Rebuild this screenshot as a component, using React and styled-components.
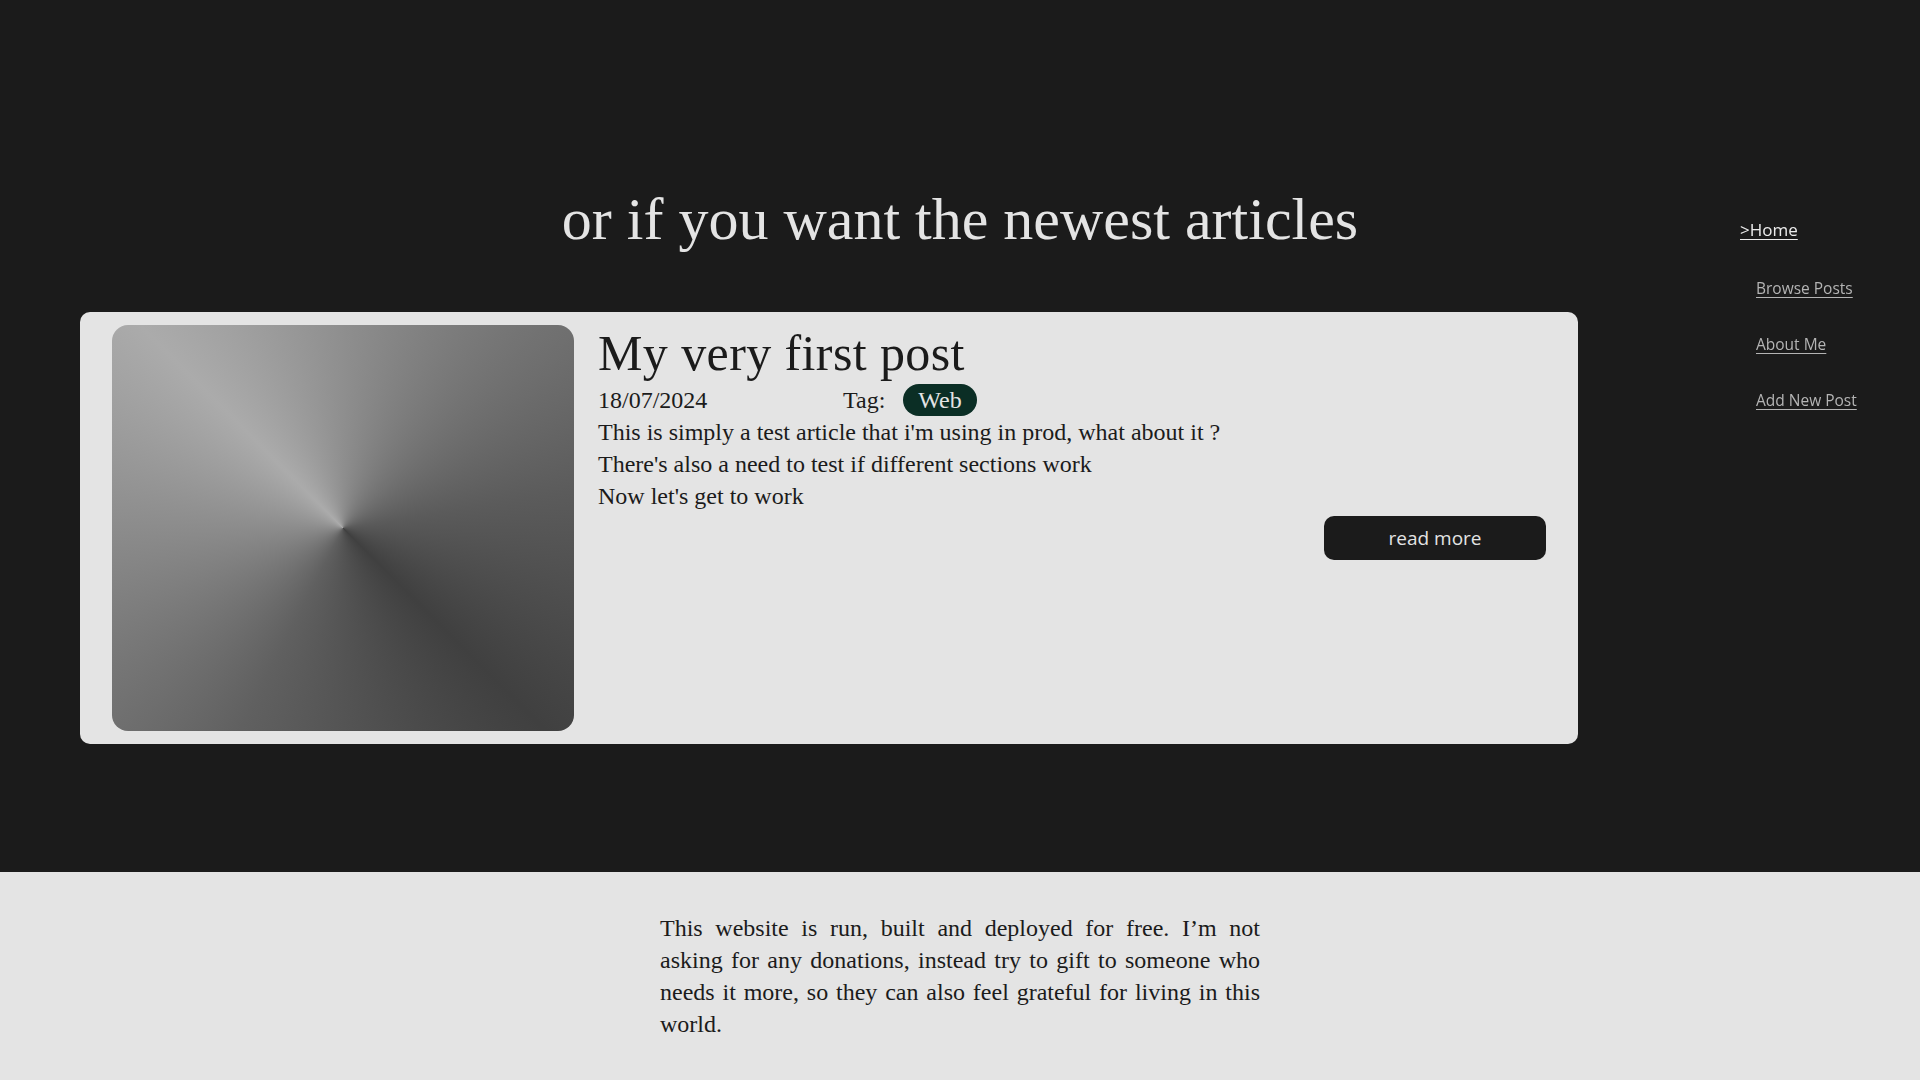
import React from 'react'
import styled, { createGlobalStyle } from 'styled-components'

const GlobalStyle = createGlobalStyle`
  html, body {
    margin: 0;
    padding: 0;
    background: #1b1b1b;
  }
  * {
    box-sizing: border-box;
  }
`;

const navLinks = [
  { label: '>Home', href: '#', active: true },
  { label: 'Browse Posts', href: '#' },
  { label: 'About Me', href: '#' },
  { label: 'Add New Post', href: '#' },
];

const post = {
  title: 'My very first post',
  date: '18/07/2024',
  tag: 'Web',
  lines: [
    "This is simply a test article that i'm using in prod, what about it ?",
    "There's also a need to test if different sections work",
    "Now let's get to work",
  ],
};

const App = () => {
  return (
    <>
      <GlobalStyle />
      <Nav>
        {navLinks.map((link) => (
          <NavLink key={link.label} href={link.href} $active={link.active}>
            {link.label}
          </NavLink>
        ))}
      </Nav>
      <Hero>
        <Heading>or if you want the newest articles</Heading>
        <PostCard>
          <Thumb />
          <PostBody>
            <PostTitle>{post.title}</PostTitle>
            <MetaRow>
              <PostDate>{post.date}</PostDate>
              <TagLabel>Tag:</TagLabel>
              <TagPill>{post.tag}</TagPill>
            </MetaRow>
            <Excerpt>
              {post.lines.map((line) => (
                <span key={line}>{line}</span>
              ))}
            </Excerpt>
            <ReadMore>read more</ReadMore>
          </PostBody>
        </PostCard>
      </Hero>
      <Footer>
        <FooterText>
          This website is run, built and deployed for free. I’m not asking for any donations,
          instead try to gift to someone who needs it more, so they can also feel grateful for
          living in this world.
        </FooterText>
      </Footer>
    </>
  )
}

const Nav = styled.nav`
  position: fixed;
  top: 218px;
  left: 1740px;
  display: flex;
  flex-direction: column;
  align-items: flex-start;
  gap: 34px;
  font-family: "Open Sans", "Noto Sans", sans-serif;
`;

const NavLink = styled.a`
  color: ${({ $active }) => ($active ? '#ececec' : '#b4b4b4')};
  font-size: ${({ $active }) => ($active ? '17px' : '15.5px')};
  line-height: ${({ $active }) => ($active ? '24px' : '22px')};
  margin-left: ${({ $active }) => ($active ? '0' : '16px')};
  margin-bottom: ${({ $active }) => ($active ? '1px' : '0')};
  text-decoration: underline;
  text-underline-offset: 3px;
`;

const Hero = styled.main`
  background: #1b1b1b;
  padding: 185px 0 128px;
`;

const Heading = styled.h1`
  margin: 0;
  text-align: center;
  color: #e4e4e4;
  font-family: "Liberation Serif", serif;
  font-weight: 400;
  font-size: 60px;
  line-height: 69px;
`;

const PostCard = styled.article`
  display: flex;
  gap: 24px;
  width: 1498px;
  height: 432px;
  margin: 58px 0 0 80px;
  padding: 13px 32px 13px 32px;
  background: #e4e4e4;
  border-radius: 10px;
`;

const Thumb = styled.div`
  flex: 0 0 462px;
  height: 406px;
  border-radius: 16px;
  background: conic-gradient(from 315deg at 50% 50%, #ababab, #5b5b5b 35%, #404040 50%, #606060 70%, #ababab);
`;

const PostBody = styled.div`
  flex: 1;
  display: flex;
  flex-direction: column;
  font-family: "Liberation Serif", serif;
  color: #1b1b1b;
`;

const PostTitle = styled.h2`
  margin: 0;
  font-weight: 400;
  font-size: 50px;
  line-height: 57px;
  letter-spacing: 0.4px;
`;

const MetaRow = styled.div`
  display: flex;
  align-items: center;
  height: 34px;
  margin-top: 1px;
  font-size: 24px;
`;

const PostDate = styled.span`
  width: 245px;
`;

const TagLabel = styled.span`
  margin-right: 18px;
`;

const TagPill = styled.span`
  display: inline-flex;
  align-items: center;
  height: 32px;
  padding: 0 15px;
  border-radius: 16px;
  background: #0b2e25;
  color: #e4e4e4;
`;

const Excerpt = styled.p`
  margin: -1px 0 0;
  display: flex;
  flex-direction: column;
  font-size: 24px;
  line-height: 32px;
`;

const ReadMore = styled.button`
  align-self: flex-end;
  width: 222px;
  height: 44px;
  margin-top: 4px;
  border: none;
  border-radius: 10px;
  background: #1b1b1b;
  color: #e4e4e4;
  font-family: "Open Sans", "Noto Sans", sans-serif;
  font-size: 19px;
  cursor: pointer;
`;

const Footer = styled.footer`
  background: #e4e4e4;
  padding: 40px 0;
  display: flex;
  justify-content: center;
`;

const FooterText = styled.p`
  margin: 0;
  width: 600px;
  font-family: "Liberation Serif", serif;
  font-size: 24px;
  line-height: 32px;
  text-align: justify;
  color: #1b1b1b;
`;

export default App
